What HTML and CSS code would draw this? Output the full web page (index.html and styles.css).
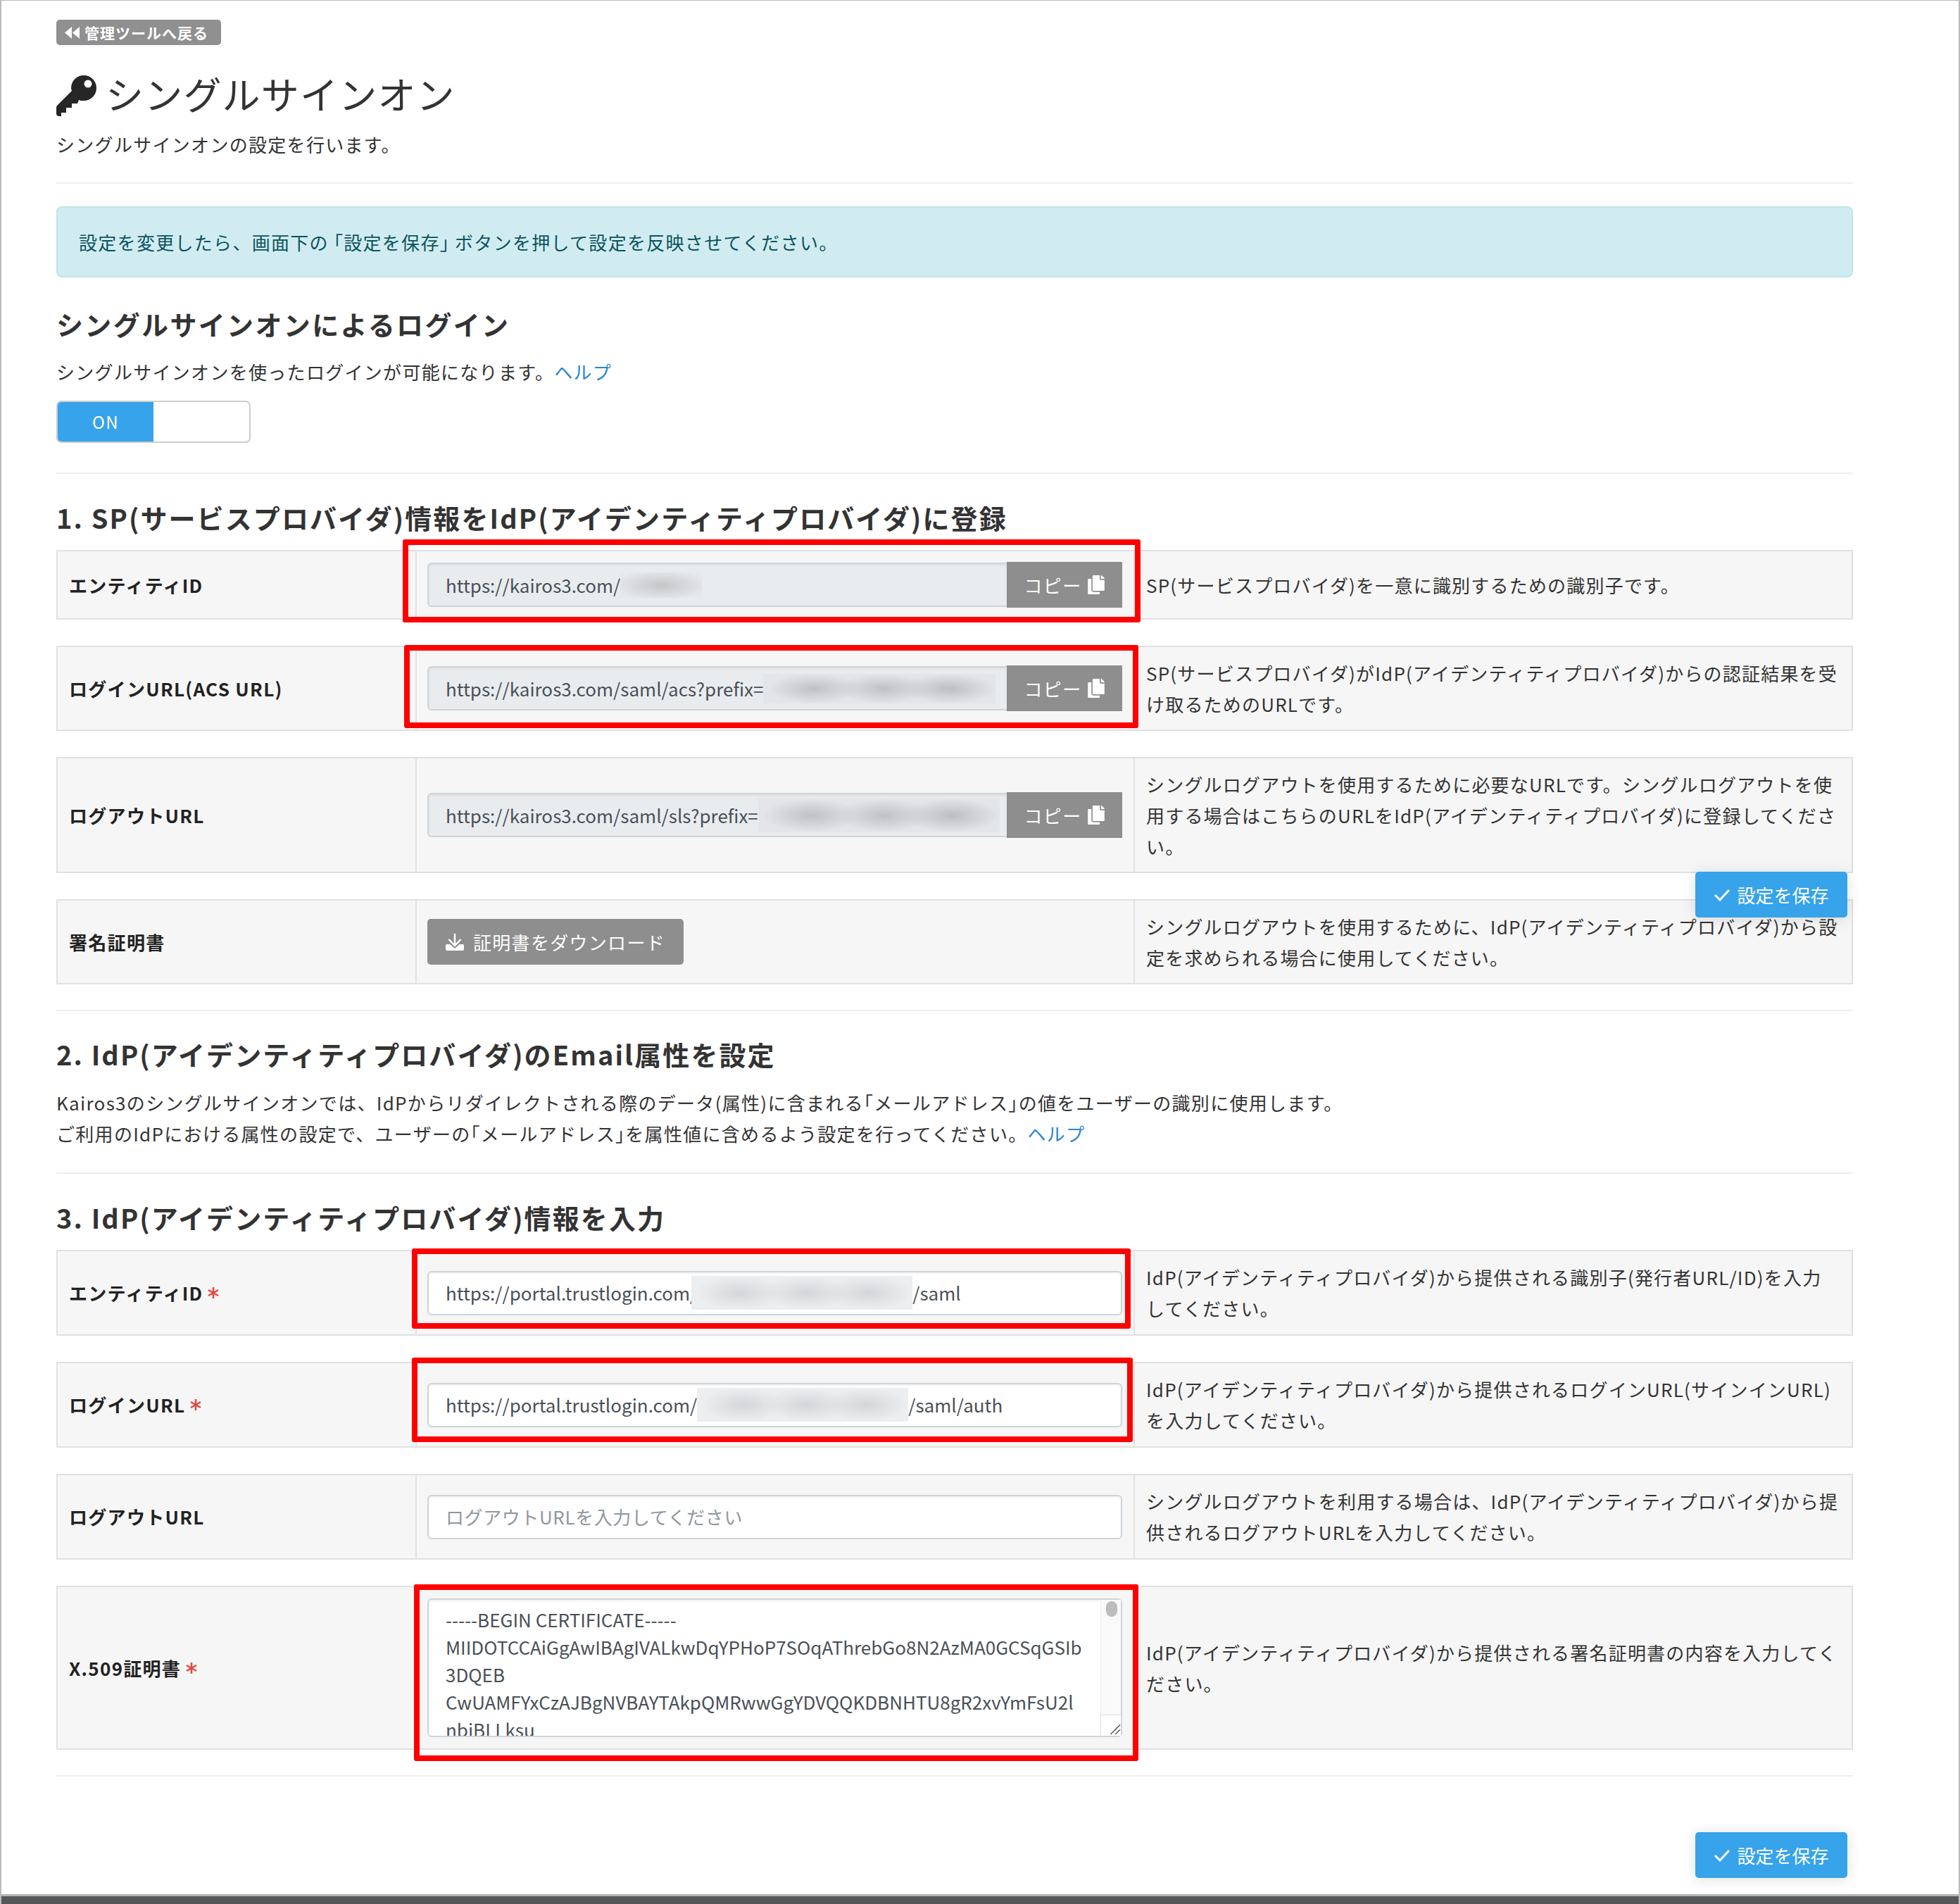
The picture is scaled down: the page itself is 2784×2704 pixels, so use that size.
FILE: index.html
```html
<!DOCTYPE html>
<html lang="ja">
<head>
<meta charset="utf-8">
<title>シングルサインオン</title>
<link rel="stylesheet" href="styles.css">
</head>
<body>
<div class="frame">
  <main class="page">
    <a class="back"><svg class="ic-back" viewBox="0 0 21 17"><path d="M10 0V17L0 8.500ZM21 0V17L11 8.500Z"/></svg>管理ツールへ戻る</a>
    <h1 class="title"><svg class="ic-key" viewBox="0 0 58 58"><path fill-rule="evenodd" d="M22 22 1 43Q0 44 0 46V54Q0 58 4 58H7V53H14V46H22V40H30L32 35C34 36 36 36 39 36A18 18 0 1 0 21 18Q21 20 22 22ZM45 6.500A5.500 5.500 0 1 1 45 17.500 5.500 5.500 0 0 1 45 6.500Z"/></svg>シングルサインオン</h1>
    <p class="lead">シングルサインオンの設定を行います。</p>
    <hr class="rule rule-top">
    <div class="alert"><span>設定を変更したら、画面下の<span class="halt halt-l">「</span>設定を保存<span class="halt halt-r">」</span>ボタンを押して設定を反映させてください。</span></div>

    <h2 class="head head-first">シングルサインオンによるログイン</h2>
    <p class="text">シングルサインオンを使ったログインが可能になります。<a class="link">ヘルプ</a></p>
    <div class="toggle"><span class="toggle-on">ON</span></div>
    <hr class="rule">

    <h2 class="head">1. SP(サービスプロバイダ)情報をIdP(アイデンティティプロバイダ)に登録</h2>
    <section class="row">
      <div class="cell-label">エンティティID</div>
      <div class="cell-main"><div class="group"><div class="field ro">https://kairos3.com/<span class="blur blur-s"></span></div><button class="copy">コピー<svg class="ic-copy" viewBox="0 0 448 512"><use href="#copy"/></svg></button></div></div>
      <div class="cell-note">SP(サービスプロバイダ)を一意に識別するための識別子です。</div>
    </section>
    <section class="row">
      <div class="cell-label">ログインURL(ACS URL)</div>
      <div class="cell-main"><div class="group"><div class="field ro">https://kairos3.com/saml/acs?prefix=<span class="blur blur-l"></span></div><button class="copy">コピー<svg class="ic-copy" viewBox="0 0 448 512"><use href="#copy"/></svg></button></div></div>
      <div class="cell-note">SP(サービスプロバイダ)がIdP(アイデンティティプロバイダ)からの認証結果を受け取るためのURLです。</div>
    </section>
    <section class="row">
      <div class="cell-label">ログアウトURL</div>
      <div class="cell-main"><div class="group"><div class="field ro">https://kairos3.com/saml/sls?prefix=<span class="blur blur-m"></span></div><button class="copy">コピー<svg class="ic-copy" viewBox="0 0 448 512"><use href="#copy"/></svg></button></div></div>
      <div class="cell-note">シングルログアウトを使用するために必要なURLです。シングルログアウトを使用する場合はこちらのURLをIdP(アイデンティティプロバイダ)に登録してください。</div>
    </section>
    <section class="row row-last">
      <div class="cell-label">署名証明書</div>
      <div class="cell-main"><button class="download"><svg class="ic-dl" viewBox="0 0 26 24"><path class="dl-line" d="M13 0V16M4.500 8 13 17 21.500 8"/><path d="M0 17Q0 15 2 15H6L13 21 20 15H24Q26 15 26 17V22Q26 24 24 24H2Q0 24 0 22Z"/></svg>証明書をダウンロード</button></div>
      <div class="cell-note">シングルログアウトを使用するために、IdP(アイデンティティプロバイダ)から設定を求められる場合に使用してください。</div>
    </section>
    <hr class="rule">

    <h2 class="head">2. IdP(アイデンティティプロバイダ)のEmail属性を設定</h2>
    <p class="text text-tight">Kairos3のシングルサインオンでは、IdPからリダイレクトされる際のデータ(属性)に含まれる<span class="halt">「</span>メールアドレス<span class="halt">」</span>の値をユーザーの識別に使用します。<br>ご利用のIdPにおける属性の設定で、ユーザーの<span class="halt">「</span>メールアドレス<span class="halt">」</span>を属性値に含めるよう設定を行ってください。<a class="link">ヘルプ</a></p>
    <hr class="rule rule-short">

    <h2 class="head">3. IdP(アイデンティティプロバイダ)情報を入力</h2>
    <div class="form-rows">
    <section class="row">
      <div class="cell-label">エンティティID<svg class="req" viewBox="0 0 16 18"><path d="M8 1V17M1 5 15 13M15 5 1 13"/></svg></div>
      <div class="cell-main"><div class="field">https://portal.trustlogin.com/<span class="blur blur-w blur-a"></span>/saml</div></div>
      <div class="cell-note"><span>IdP(アイデンティティプロバイダ)から提供される識別子(発行者URL/ID)を入力<br>してください。</span></div>
    </section>
    <section class="row">
      <div class="cell-label">ログインURL<svg class="req" viewBox="0 0 16 18"><path d="M8 1V17M1 5 15 13M15 5 1 13"/></svg></div>
      <div class="cell-main"><div class="field">https://portal.trustlogin.com/<span class="blur blur-w blur-b"></span>/saml/auth</div></div>
      <div class="cell-note">IdP(アイデンティティプロバイダ)から提供されるログインURL(サインインURL)を入力してください。</div>
    </section>
    <section class="row">
      <div class="cell-label">ログアウトURL</div>
      <div class="cell-main"><div class="field ph">ログアウトURLを入力してください</div></div>
      <div class="cell-note">シングルログアウトを利用する場合は、IdP(アイデンティティプロバイダ)から提供されるログアウトURLを入力してください。</div>
    </section>
    <section class="row row-last">
      <div class="cell-label">X.509証明書<svg class="req" viewBox="0 0 16 18"><path d="M8 1V17M1 5 15 13M15 5 1 13"/></svg></div>
      <div class="cell-main"><div class="cert-wrap"><textarea class="cert" readonly>-----BEGIN CERTIFICATE-----
MIIDOTCCAiGgAwIBAgIVALkwDqYPHoP7SOqAThrebGo8N2AzMA0GCSqGSIb
3DQEB
CwUAMFYxCzAJBgNVBAYTAkpQMRwwGgYDVQQKDBNHTU8gR2xvYmFsU2l
nbiBLLksu</textarea><span class="track"><span class="thumb"></span></span><span class="resizer"><svg viewBox="0 0 29 30"><path d="M14 28 28 14M21 28 28 21"/></svg></span></div></div>
      <div class="cell-note">IdP(アイデンティティプロバイダ)から提供される署名証明書の内容を入力してください。</div>
    </section>
    </div>
    <hr class="rule">
    <div class="actions"><button class="save"><svg class="ic-check" viewBox="0 0 24 18"><path d="M2 9 9 16 22 2"/></svg>設定を保存</button></div>
  </main>
  <footer class="foot"></footer>

  <button class="save save-float"><svg class="ic-check" viewBox="0 0 24 18"><path d="M2 9 9 16 22 2"/></svg>設定を保存</button>
  <div class="mark m1"></div>
  <div class="mark m2"></div>
  <div class="mark m3"></div>
  <div class="mark m4"></div>
  <div class="mark m5"></div>
</div>
<svg class="defs" width="0" height="0"><defs><path id="copy" d="M320 448v40c0 13.255-10.745 24-24 24H24c-13.255 0-24-10.745-24-24V120c0-13.255 10.745-24 24-24h72v296c0 30.879 25.121 56 56 56h168zm0-344V0H152c-13.255 0-24 10.745-24 24v368c0 13.255 10.745 24 24 24h272c13.255 0 24-10.745 24-24V128H344c-13.2 0-24-10.800-24-24zm120.971-31.029L375.029 7.029A24 24 0 0 0 358.059 0H352v96h96v-6.059a24 24 0 0 0-7.029-16.970z"/></defs></svg>
</body>
</html>
```
FILE: styles.css
```css
* { box-sizing: border-box; }
html, body { margin: 0; padding: 0; background: #fff; }
body {
  font-family: "Noto Sans CJK JP", "Noto Sans", sans-serif;
  font-size: 26px;
  line-height: 44px;
  letter-spacing: 1.3px;
  color: #333;
}
.frame {
  position: relative;
  width: 2784px;
  height: 2704px;
  border-top: 1px solid #bbb;
  border-left: 2px solid #bbb;
  border-right: 2px solid #bbb;
  display: flex;
  flex-direction: column;
  overflow: hidden;
}
.page { flex: 1; padding: 27px 150px 0 78px; }
.defs { position: absolute; }
.halt { font-feature-settings: "halt"; }
.halt-l { margin-left: 7px; }
.halt-r { margin-right: 7px; }

.back {
  display: flex;
  align-items: center;
  width: 234px;
  height: 36px;
  padding-left: 12px;
  background: #909090;
  border-radius: 5px;
  color: #fff;
  font-size: 21px;
  font-weight: 700;
  line-height: 34px;
  letter-spacing: 1px;
}
.ic-back { width: 21px; height: 17px; margin-right: 7px; fill: #fff; }
.title {
  display: flex;
  align-items: center;
  margin: 37px 0 0;
  height: 64px;
  font-size: 54px;
  font-weight: 400;
  line-height: 64px;
  letter-spacing: 1.2px;
  color: #333;
}
.ic-key { width: 58px; height: 58px; margin: 6px 12px 0 0; fill: #262626; flex: none; }
.lead { margin: 18px 0 0; }
.text { margin: 18px 0 0; }
.text-tight { margin-top: 19px; }
.rule { height: 2px; margin: 36px 0; border: 0; background: #eee; }
.rule-top { margin: 32px 0 32px; }
.rule-short { margin: 33px 0 34px; }
.toggle + .rule { margin-bottom: 34px; }
.row-last + .rule { margin-bottom: 33px; }
.alert {
  height: 101px;
  padding: 0 30px;
  display: flex;
  align-items: center;
  background: #d1ecf1;
  border: 2px solid #bee5eb;
  border-radius: 8px;
  color: #0c5460;
}
.head {
  margin: 0;
  font-size: 38px;
  font-weight: 700;
  line-height: 56px;
  letter-spacing: 2.1px;
  color: #333;
}
.head-first { margin-top: 38px; letter-spacing: 2.35px; }
.head + .row, .head + .form-rows { margin-top: 18px; }
.link { color: #2a86d0; }
.toggle {
  width: 276px;
  height: 60px;
  margin: 19px 0 42px;
  background: #fff;
  border: 2px solid #ccc;
  border-radius: 7px;
  overflow: hidden;
}
.toggle-on {
  display: block;
  width: 136px;
  height: 100%;
  background: #36a3eb;
  color: #fff;
  font-size: 24px;
  line-height: 56px;
  text-align: center;
}

.row {
  display: grid;
  grid-template-columns: 508px 1020px 1fr;
  margin-bottom: 37px;
  background: #f6f6f6;
  border: 2px solid #dfe1e5;
}
.row-last { margin-bottom: 0; }
.cell-label {
  display: flex;
  align-items: center;
  padding-left: 16px;
  font-weight: 700;
  color: #222;
}
.req {
  width: 16px;
  height: 18px;
  margin-left: 7px;
  fill: none;
  stroke: #e2473f;
  stroke-width: 2.5;
}
.cell-main {
  display: flex;
  align-items: center;
  padding: 16px 16px 16px 15px;
  border-left: 2px solid #e3e3e3;
}
.cell-note {
  display: flex;
  align-items: center;
  padding: 14.5px 14px 14.5px 16px;
  border-left: 2px solid #e3e3e3;
  letter-spacing: 1.2px;
}
.form-rows .cell-note { padding-top: 15px; padding-bottom: 15px; }
.group { display: flex; flex: 1; min-width: 0; }
.field {
  flex: 1;
  min-width: 0;
  height: 63px;
  padding-left: 24px;
  display: flex;
  align-items: center;
  white-space: nowrap;
  overflow: hidden;
  background: #fff;
  border: 2px solid #ced4da;
  border-radius: 6px;
  box-shadow: inset 0 2px 3px rgba(0,0,0,.06);
  color: #495057;
  letter-spacing: 0;
}
.field.ro { background: #e9ecef; border-radius: 6px 0 0 6px; border-right: 0; }
.field.ph { color: #8f979e; letter-spacing: 0.6px; }
.blur {
  display: block;
  flex: none;
  height: 42px;
  background:
    radial-gradient(ellipse 20% 50% at 22% 50%, #bfc1c4, transparent),
    radial-gradient(ellipse 20% 50% at 52% 50%, #bfc1c4, transparent),
    radial-gradient(ellipse 20% 50% at 80% 50%, #bcbec1, transparent),
    #e3e5e8;
}
.blur-s {
  width: 116px;
  height: 36px;
  background: radial-gradient(ellipse 60% 60% at 50% 50%, #c4c6c8, transparent), #e7e9ec;
}
.blur-l { width: 330px; }
.blur-m { width: 343px; height: 48px; }
.blur-w {
  height: 48px;
  background:
    radial-gradient(ellipse 20% 50% at 22% 50%, #d5d6d9, transparent),
    radial-gradient(ellipse 20% 50% at 52% 50%, #d5d6d9, transparent),
    radial-gradient(ellipse 20% 50% at 80% 50%, #d5d6d9, transparent),
    #edeeef;
}
.blur-a { width: 314px; margin-left: -8px; }
.blur-b { width: 300px; }
.copy {
  flex: none;
  display: flex;
  align-items: center;
  justify-content: center;
  gap: 9px;
  width: 164px;
  height: 65px;
  margin: -1px 0;
  padding: 0;
  border: 0;
  background: #8e8e8e;
  color: #fff;
  font: inherit;
  letter-spacing: inherit;
}
.ic-copy { width: 24px; height: 27px; fill: #fff; }
.download {
  display: flex;
  align-items: center;
  gap: 13px;
  width: 364px;
  height: 65px;
  padding: 0 0 0 26px;
  border: 0;
  border-radius: 5px;
  background: #8e8e8e;
  color: #fff;
  font: inherit;
  letter-spacing: 1.3px;
}
.ic-dl { width: 26px; height: 24px; fill: #fff; }
.dl-line { fill: none; stroke: #fff; stroke-width: 2.5; }
.cert-wrap { position: relative; flex: 1; height: 197px; }
.cert {
  display: block;
  width: 100%;
  height: 100%;
  padding: 8px 30px 0 24px;
  resize: none;
  overflow: hidden;
  white-space: pre;
  background: #fff;
  border: 2px solid #ced4da;
  border-radius: 6px;
  box-shadow: inset 0 2px 3px rgba(0,0,0,.06);
  color: #495057;
  font: inherit;
  line-height: 39px;
  letter-spacing: 0;
  outline: 0;
}
.track {
  position: absolute;
  top: 2px;
  right: 2px;
  width: 29px;
  height: 165px;
  padding: 2px 0 0 7px;
  background: #fafafa;
  border-left: 1px solid #eee;
}
.thumb { display: block; width: 16px; height: 22px; border-radius: 8px; background: #bdbdbd; }
.resizer {
  position: absolute;
  right: 2px;
  bottom: 2px;
  width: 29px;
  height: 30px;
  background: #fff;
  border-top: 1px solid #ddd;
  border-left: 1px solid #ddd;
}
.resizer svg { display: block; width: 100%; height: 100%; fill: none; stroke: #555; stroke-width: 1.500; }

.actions { display: flex; justify-content: flex-end; padding-right: 8px; margin-top: 79px; }
.form-rows + .rule { margin-bottom: 36px; }
.save {
  display: flex;
  align-items: center;
  justify-content: center;
  gap: 9px;
  width: 216px;
  height: 65px;
  padding: 0;
  border: 0;
  border-radius: 5px;
  background: #36a3eb;
  color: #fff;
  font: inherit;
  letter-spacing: 0;
  box-shadow: 0 2px 20px rgba(0,0,0,.13);
}
.ic-check { width: 24px; height: 18px; fill: none; stroke: #fff; stroke-width: 3; }
.save-float { position: absolute; top: 1237px; left: 2406px; }
.foot { height: 14px; background: #55585b; border-top: 3px solid #b4b4b4; }

.mark { position: absolute; border: 8px solid #f00; border-radius: 3px; pointer-events: none; }
.m1 { left: 570px; top: 765px; width: 1048px; height: 118px; }
.m2 { left: 572px; top: 915px; width: 1043px; height: 118px; }
.m3 { left: 583px; top: 1772px; width: 1021px; height: 114px; }
.m4 { left: 583px; top: 1927px; width: 1024px; height: 120px; }
.m5 { left: 586px; top: 2249px; width: 1029px; height: 251px; }
```
